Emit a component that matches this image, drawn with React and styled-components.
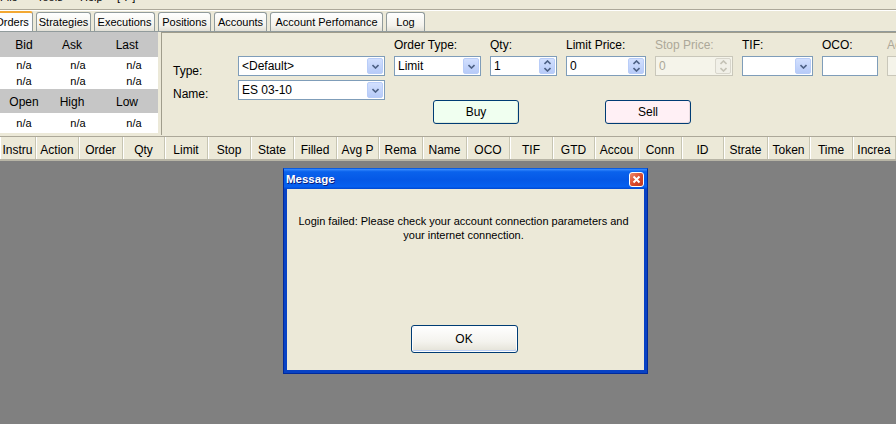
import React from 'react';
import styled, { createGlobalStyle } from 'styled-components';

const Global = createGlobalStyle`
  html, body { margin: 0; padding: 0; background: #808080; }
  body { font-family: "Liberation Sans", Arial, sans-serif; }
  * { box-sizing: border-box; }
`;

const Screen = styled.div`
  position: relative;
  width: 896px;
  height: 424px;
  overflow: hidden;
  background: #ece9d8;
  display: flex;
  flex-direction: column;
  font-family: "Liberation Sans", Arial, sans-serif;
  font-size: 11px;
  color: #000;
`;

const MenuBar = styled.div`
  height: 10px;
  overflow: hidden;
  display: grid;
  grid-template-columns: 37px 43px 37px auto;
  border-bottom: 1px solid #aca899;
`;

const MenuItem = styled.span`
  display: block;
  margin-top: -9px;
  line-height: 13px;
  font-size: 11px;
`;

const TabStrip = styled.div`
  height: 22px;
  display: flex;
  align-items: flex-end;
  gap: 3px;
  margin-left: -9px;
  border-top: 1px solid #fff;
  border-bottom: 1px solid #919b9c;
`;

const Tab = styled.div`
  height: ${p => (p.$active ? '20px' : '19px')};
  width: ${p => p.$w}px;
  flex: none;
  display: flex;
  align-items: center;
  justify-content: center;
  border: 1px solid #919b9c;
  border-bottom: 0;
  border-top: ${p => (p.$active ? '2px solid #f2a733' : '1px solid #919b9c')};
  border-radius: 3px 3px 0 0;
  background: ${p => (p.$active ? '#fcfcfe' : 'linear-gradient(#ffffff, #f3f2ec 70%, #e2e0d6)')};
  font-size: 11px;
  white-space: nowrap;
`;

const Content = styled.div`
  height: 103px;
  display: flex;
  gap: 3px;
`;

const Quote = styled.div`
  width: 158px;
  display: grid;
  grid-template-columns: 48px 48px 62px;
  grid-template-rows: 25px 16px 16px 24px 20px;
  background: #fff;
  align-self: flex-start;
`;

const QuoteHead = styled.div`
  background: #c6c6c6;
  display: flex;
  align-items: center;
  justify-content: center;
  font-size: 12px;
  padding-top: 1px;
`;

const QuoteVal = styled.div`
  display: flex;
  align-items: center;
  justify-content: center;
  padding-left: ${p => p.$shift || 0}px;
  font-size: 11px;
`;

const OrderPanel = styled.div`
  flex: 1;
  border-top: 1px solid #a09d8c;
  border-left: 1px solid #a09d8c;
  padding-left: 11px;
  display: grid;
  grid-template-columns: 56px 147px 87px 67px 80px 78px 71px 56px 1fr;
  grid-template-rows: 23px 24px 20px 24px;
  column-gap: 9px;
`;

const FieldLabel = styled.div`
  grid-column: ${p => p.$col};
  grid-row: 1;
  align-self: end;
  margin-bottom: 4px;
  font-size: 12px;
  color: ${p => (p.$disabled ? '#aca899' : '#000')};
  white-space: nowrap;
`;

const RowLabel = styled.div`
  grid-column: 1;
  grid-row: ${p => p.$row};
  align-self: ${p => (p.$row === 2 ? 'start' : 'end')};
  margin-top: ${p => (p.$row === 2 ? '8px' : '0')};
  margin-bottom: ${p => (p.$row === 3 ? '-1px' : '0')};
  font-size: 12px;
  line-height: 14px;
`;

const Cell = styled.div`
  grid-column: ${p => p.$col};
  grid-row: ${p => p.$row};
  align-self: start;
  min-width: 0;
`;

const Box = styled.div`
  height: 20px;
  display: flex;
  align-items: stretch;
  border: 1px solid ${p => (p.$disabled ? '#c9c7ba' : '#7f9db9')};
  background: ${p => (p.$disabled ? '#f5f4ea' : '#fff')};
  overflow: hidden;
`;

const BoxText = styled.div`
  flex: 1;
  padding-left: 3px;
  display: flex;
  align-items: center;
  font-size: 12px;
  color: ${p => (p.$disabled ? '#aca899' : '#000')};
  white-space: nowrap;
  overflow: hidden;
`;

const DropBtn = styled.div`
  width: 16px;
  margin: 1px;
  border: 1px solid #b9cdf8;
  border-radius: 2px;
  background: linear-gradient(#d2e0fe, #b7cbf8);
  display: flex;
  align-items: center;
  justify-content: center;
`;

const SpinCol = styled.div`
  width: 16px;
  margin: 1px;
  display: flex;
  flex-direction: column;
  border: 1px solid ${p => (p.$disabled ? '#d8d6cc' : '#b9cdf8')};
  border-radius: 2px;
  background: ${p => (p.$disabled ? '#f1f0e8' : 'linear-gradient(#d2e0fe, #b7cbf8)')};
`;

const SpinHalf = styled.div`
  flex: 1;
  display: flex;
  align-items: center;
  justify-content: center;
`;

const Chevron = ({ up, color = '#4d6185' }) => (
  <svg width="7" height="5" viewBox="0 0 7 5">
    <path
      d={up ? 'M0.5 4 L3.5 1 L6.5 4' : 'M0.5 1 L3.5 4 L6.5 1'}
      fill="none"
      stroke={color}
      strokeWidth="1.6"
    />
  </svg>
);

const Select = ({ value }) => (
  <Box>
    <BoxText>{value}</BoxText>
    <DropBtn>
      <Chevron />
    </DropBtn>
  </Box>
);

const Spin = ({ value, disabled }) => (
  <Box $disabled={disabled}>
    <BoxText $disabled={disabled}>{value}</BoxText>
    <SpinCol $disabled={disabled}>
      <SpinHalf>
        <Chevron up color={disabled ? '#c4c2b6' : '#4d6185'} />
      </SpinHalf>
      <SpinHalf>
        <Chevron color={disabled ? '#c4c2b6' : '#4d6185'} />
      </SpinHalf>
    </SpinCol>
  </Box>
);

const ActionButton = styled.button`
  grid-row: 4;
  grid-column: ${p => p.$col};
  justify-self: start;
  margin-left: 39px;
  width: 86px;
  height: 24px;
  border: 1px solid #003c74;
  border-radius: 3px;
  background: ${p => p.$bg};
  font-family: inherit;
  font-size: 12px;
  color: #000;
  padding: 0;
  box-shadow: inset -1px -1px 0 rgba(0, 0, 0, 0.08);
`;

const HeaderRow = styled.div`
  margin-top: 1px;
  height: 25px;
  display: grid;
  grid-template-columns: 36px 43px 44px 42px 43px 43px 43px 43px 42px 44px 44px 43px 43px 42px 44px 43px 42px 44px 42px 43px 1fr;
  border-top: 1px solid #aca899;
  border-bottom: 2px solid #b8b5a6;
  background: #ece9d8;
`;

const HeaderCell = styled.div`
  display: flex;
  align-items: center;
  justify-content: center;
  padding-top: 3px;
  font-size: 12px;
  border-right: 1px solid #c7c5b2;
  box-shadow: inset 1px 0 0 #fff;
  white-space: nowrap;
  overflow: hidden;
`;

const Workspace = styled.div`
  flex: 1;
  background: #808080;
`;

const Dialog = styled.div`
  position: absolute;
  left: 283px;
  top: 168px;
  width: 365px;
  height: 206px;
  display: flex;
  flex-direction: column;
  background: #0842c4;
  border: 1px solid #002a9c;
  border-top-color: #0a5be0;
`;

const TitleBar = styled.div`
  height: 20px;
  display: flex;
  align-items: center;
  justify-content: space-between;
  padding: 0 3px 0 2px;
  background: linear-gradient(#3a8dff 0%, #0a62ec 14%, #0558e6 55%, #0660f0 88%, #0047d0 100%);
`;

const Title = styled.span`
  color: #fff;
  font-weight: bold;
  font-size: 11.5px;
  text-shadow: 1px 1px 0 #0a1e7c;
`;

const CloseBtn = styled.div`
  width: 15px;
  height: 15px;
  border: 1px solid #fff;
  border-radius: 3px;
  background: linear-gradient(135deg, #f08a6a, #d9472a 55%, #c03a1f);
  display: flex;
  align-items: center;
  justify-content: center;
`;

const DialogBody = styled.div`
  flex: 1;
  margin: 0 3px 3px 3px;
  background: #ece9d8;
  display: flex;
  flex-direction: column;
  align-items: center;
  padding: 25px 10px 17px;
`;

const MessageText = styled.p`
  margin: 0 0 0 -4px;
  text-align: center;
  font-size: 11px;
  line-height: 14px;
  width: 345px;
`;

const OkButton = styled.button`
  margin-top: auto;
  margin-right: 3px;
  width: 107px;
  height: 28px;
  border: 1px solid #003c74;
  border-radius: 3px;
  background: linear-gradient(#ffffff, #f4f3ee 60%, #e3e1d6);
  box-shadow: inset 0 0 0 1px #fdfdfd, inset -1px -2px 0 #bcd0f6, inset 1px 1px 0 #cfe0fb;
  font-family: inherit;
  font-size: 12px;
  color: #000;
  padding: 0;
`;

const tabs = [
  ['Orders', 42, true],
  ['Strategies', 55],
  ['Executions', 61],
  ['Positions', 53],
  ['Accounts', 53],
  ['Account Perfomance', 113],
  ['Log', 39],
];

const columns = ['Instru', 'Action', 'Order', 'Qty', 'Limit', 'Stop', 'State', 'Filled', 'Avg P', 'Rema', 'Name', 'OCO', 'TIF', 'GTD', 'Accou', 'Conn', 'ID', 'Strate', 'Token', 'Time', 'Increa'];

export default function App() {
  return (
    <Screen>
      <Global />
      <MenuBar>
        <MenuItem>File</MenuItem>
        <MenuItem>Tools</MenuItem>
        <MenuItem>Help</MenuItem>
        <MenuItem>[ ? ]</MenuItem>
      </MenuBar>
      <TabStrip>
        {tabs.map(([t, w, a]) => (
          <Tab key={t} $active={a} $w={w}>{t}</Tab>
        ))}
      </TabStrip>
      <Content>
        <Quote>
          <QuoteHead>Bid</QuoteHead>
          <QuoteHead>Ask</QuoteHead>
          <QuoteHead>Last</QuoteHead>
          <QuoteVal>n/a</QuoteVal>
          <QuoteVal $shift={12}>n/a</QuoteVal>
          <QuoteVal $shift={14}>n/a</QuoteVal>
          <QuoteVal>n/a</QuoteVal>
          <QuoteVal $shift={12}>n/a</QuoteVal>
          <QuoteVal $shift={14}>n/a</QuoteVal>
          <QuoteHead>Open</QuoteHead>
          <QuoteHead>High</QuoteHead>
          <QuoteHead>Low</QuoteHead>
          <QuoteVal>n/a</QuoteVal>
          <QuoteVal $shift={12}>n/a</QuoteVal>
          <QuoteVal $shift={14}>n/a</QuoteVal>
        </Quote>
        <OrderPanel>
          <FieldLabel $col={3}>Order Type:</FieldLabel>
          <FieldLabel $col={4}>Qty:</FieldLabel>
          <FieldLabel $col={5}>Limit Price:</FieldLabel>
          <FieldLabel $col={6} $disabled>Stop Price:</FieldLabel>
          <FieldLabel $col={7}>TIF:</FieldLabel>
          <FieldLabel $col={8}>OCO:</FieldLabel>
          <FieldLabel $col={9} $disabled>Account:</FieldLabel>

          <RowLabel $row={2}>Type:</RowLabel>
          <RowLabel $row={3}>Name:</RowLabel>

          <Cell $col={2} $row={2}><Select value="<Default>" /></Cell>
          <Cell $col={2} $row={3}><Select value="ES 03-10" /></Cell>
          <Cell $col={3} $row={2}><Select value="Limit" /></Cell>
          <Cell $col={4} $row={2}><Spin value="1" /></Cell>
          <Cell $col={5} $row={2}><Spin value="0" /></Cell>
          <Cell $col={6} $row={2}><Spin value="0" disabled /></Cell>
          <Cell $col={7} $row={2}><Select value="" /></Cell>
          <Cell $col={8} $row={2}><Box><BoxText /></Box></Cell>
          <Cell $col={9} $row={2}><Box $disabled><BoxText /></Box></Cell>

          <ActionButton $col="3 / span 2" $bg="#f0fff0">Buy</ActionButton>
          <ActionButton $col="5 / span 2" $bg="#fff0f5">Sell</ActionButton>
        </OrderPanel>
      </Content>
      <HeaderRow>
        {columns.map(c => (
          <HeaderCell key={c}>{c}</HeaderCell>
        ))}
      </HeaderRow>
      <Workspace />

      <Dialog>
        <TitleBar>
          <Title>Message</Title>
          <CloseBtn>
            <svg width="9" height="9" viewBox="0 0 9 9">
              <path d="M1.5 1.5 L7.5 7.5 M7.5 1.5 L1.5 7.5" stroke="#fff" strokeWidth="2" />
            </svg>
          </CloseBtn>
        </TitleBar>
        <DialogBody>
          <MessageText>
            Login failed: Please check your account connection parameters and your internet connection.
          </MessageText>
          <OkButton>OK</OkButton>
        </DialogBody>
      </Dialog>
    </Screen>
  );
}
